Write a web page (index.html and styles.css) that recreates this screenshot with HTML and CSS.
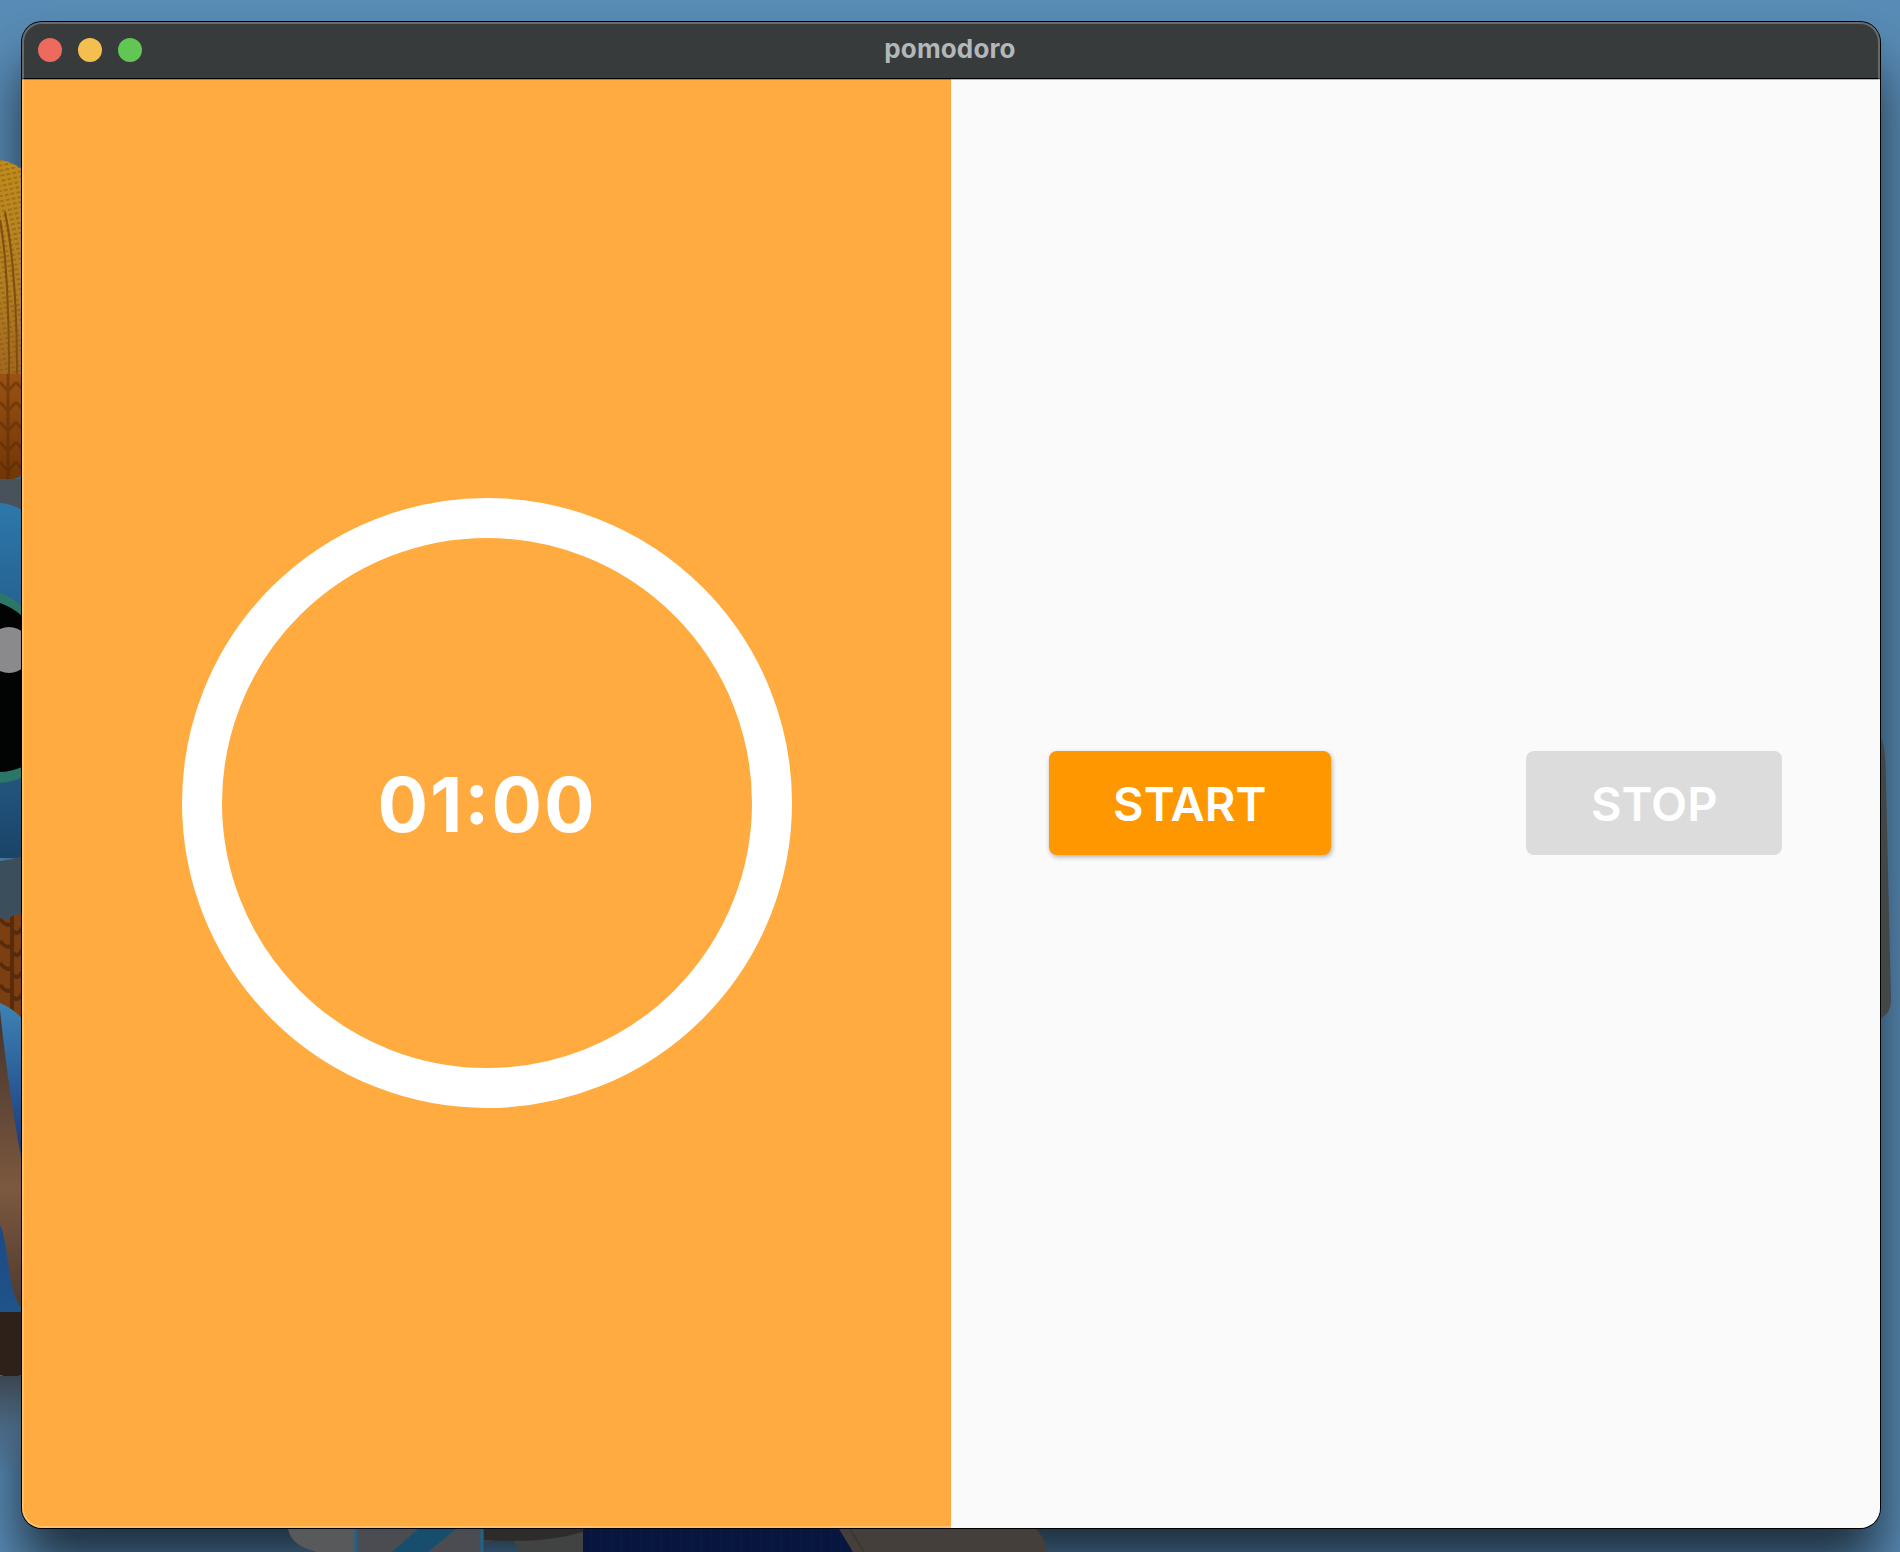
FILE: index.html
```html
<!DOCTYPE html>
<html lang="en">
<head>
<meta charset="utf-8">
<title>pomodoro</title>
<link rel="stylesheet" href="styles.css">
</head>
<body>
<div class="desktop">
  <svg class="wallpaper" width="1900" height="1552" viewBox="0 0 1900 1552" aria-hidden="true">
    <defs>
      <filter id="shade" x="-10%" y="-10%" width="120%" height="120%"><feGaussianBlur stdDeviation="27"/></filter>
      <pattern id="knit" width="6" height="5" patternUnits="userSpaceOnUse" patternTransform="rotate(-12)">
        <path d="M0 2h4" stroke="#7e4e12" stroke-width="1.5" opacity=".6"/>
      </pattern>
      <pattern id="rope" width="16" height="20" patternUnits="userSpaceOnUse">
        <path d="M0 2l8 9M16 2l-8 9M8 0v20" stroke="#4b2205" stroke-width="3" fill="none" opacity=".4"/>
      </pattern>
      <pattern id="braid" width="22" height="22" patternUnits="userSpaceOnUse" patternTransform="translate(0 915)">
        <path d="M0 4q8 10 13 3M13 16q5 5 9-3M12 0v22" stroke="#351704" stroke-width="4" fill="none" opacity=".5"/>
      </pattern>
      <linearGradient id="hat" x1="0" y1="0" x2="0" y2="1"><stop offset="0" stop-color="#c08c1c"/><stop offset=".6" stop-color="#b17f22"/><stop offset="1" stop-color="#a2661c"/></linearGradient>
      <linearGradient id="band" x1="0" y1="0" x2="0" y2="1"><stop offset="0" stop-color="#9a5212"/><stop offset="1" stop-color="#713606"/></linearGradient>
      <linearGradient id="arm" x1="0" y1="0" x2="0" y2="1"><stop offset="0" stop-color="#43342d"/><stop offset=".6" stop-color="#7c583f"/><stop offset="1" stop-color="#4e3a30"/></linearGradient>
      <linearGradient id="shirt" x1="0" y1="0" x2="0" y2="1"><stop offset="0" stop-color="#3d83b3"/><stop offset=".45" stop-color="#1c3f82"/><stop offset="1" stop-color="#1f5489"/></linearGradient>
      <linearGradient id="ground" x1="0" y1="0" x2="0" y2="1"><stop offset="0" stop-color="#3b4650"/><stop offset=".5" stop-color="#47627a" stop-opacity=".8"/><stop offset="1" stop-color="#47627a" stop-opacity="0"/></linearGradient>
      <linearGradient id="face" x1="0" y1="0" x2="0" y2="1"><stop offset="0" stop-color="#2d78ab"/><stop offset="1" stop-color="#24618f"/></linearGradient>
      <linearGradient id="neck" x1="0" y1="0" x2="0" y2="1"><stop offset="0" stop-color="#22567f"/><stop offset="1" stop-color="#1b4368"/></linearGradient>
      <pattern id="weave" width="10" height="4" patternUnits="userSpaceOnUse"><path d="M1 0v4" stroke="#061846" stroke-width="3" opacity=".6"/></pattern>
    </defs>
    <rect width="1900" height="1552" fill="#588bb5"/>
    <rect x="22" y="64" width="1858" height="1502" rx="22" fill="#000" opacity=".66" filter="url(#shade)"/>
    <path d="M0 160q12 2 22 9v211H0z" fill="url(#hat)"/>
    <path d="M0 160q12 2 22 9v211H0z" fill="url(#knit)"/>
    <path d="M0 220q9 50 9 155M5 212q12 60 12 163" stroke="#7e4e12" stroke-width="2" fill="none"/>
    <path d="M0 374h22v101q-8 6-22 4z" fill="url(#band)"/>
    <path d="M0 374h22v101q-8 6-22 4z" fill="url(#rope)"/>
    <path d="M0 479h22v31q-12-6-22-6z" fill="#47525b"/>
    <path d="M0 503q12 1 22 7v105H0z" fill="url(#face)"/>
    <path d="M0 593q12 3 22 14v180H0z" fill="#2b7667"/>
    <path d="M0 603q12 4 22 13v151q-12 5-22 5z" fill="#020404"/>
    <ellipse cx="9" cy="650" rx="22" ry="23" fill="#8a8a8c"/>
    <path d="M0 783q14-1 22-6v81H0z" fill="url(#neck)"/>
    <path d="M0 861q12-1 22-5v66H0z" fill="#3b4e5b"/>
    <path d="M0 917q4 3 7 3 7-7 15-6v110H0z" fill="#7b3f12"/>
    <path d="M0 917q4 3 7 3 7-7 15-6v110H0z" fill="url(#braid)"/>
    <path d="M0 1003q12 5 22 15v296H0z" fill="url(#shirt)"/>
    <path d="M0 1010q9 85 22 152v146q-8-6-13-38Q5 1235 0 1225z" fill="url(#arm)"/>
    <path d="M0 1312h22v63q-12 3-22 0z" fill="#2e211a"/>
    <path d="M0 1376h22v100H0z" fill="url(#ground)"/>
    <path d="M1880 736q6 8 6 50l5 215q0 12-11 18z" fill="#444747"/>
    <path d="M288 1529h67v23h-38q-26-6-29-23z" fill="#58595b"/>
    <path d="M356 1529h126v23H356z" fill="#4a4c51"/>
    <path d="M418 1529h38l-28 23h-36z" fill="#174d6d"/>
    <path d="M356 1529v23M482 1529v23" stroke="#1d638b" stroke-width="3"/>
    <path d="M484 1529h99v23h-64l-6-13-29 3z" fill="#414343"/>
    <path d="M484 1529h99v3q-40 12-99 8z" fill="#2d2c2b"/>
    <path d="M583 1529h257l14 23H583z" fill="#08163e"/>
    <path d="M583 1529h257l14 23H583z" fill="url(#weave)"/>
    <path d="M839 1529h197q10 10 11 23H853z" fill="#443f3a"/>
    <path d="M850 1529l14 23" stroke="#3c3733" stroke-width="2"/>
  </svg>

  <main class="window">
    <header class="titlebar">
      <div class="lights">
        <span class="light light-close"></span>
        <span class="light light-minimize"></span>
        <span class="light light-zoom"></span>
      </div>
      <h1 class="title">pomodoro</h1>
    </header>
    <div class="panes">
      <section class="timer-pane">
        <div class="ring"><span class="time">01:00</span></div>
      </section>
      <section class="controls-pane">
        <button class="button button-start">START</button>
        <button class="button button-stop" disabled>STOP</button>
      </section>
    </div>
  </main>
</div>
</body>
</html>
```
FILE: styles.css
```css
* {
  box-sizing: border-box;
}

body {
  margin: 0;
  font-family: Inter, "Liberation Sans", sans-serif;
}

.desktop {
  position: relative;
  width: 1900px;
  height: 1552px;
  padding: 22px 20px 24px 22px;
  overflow: hidden;
}

.wallpaper {
  position: absolute;
  inset: 0;
}

.window {
  position: relative;
  display: flex;
  flex-direction: column;
  width: 100%;
  height: 100%;
  border-radius: 20px;
  box-shadow: 0 0 0 1px #000;
  overflow: hidden;
}

/* light rim drawn over the window edge */
.window::after {
  content: "";
  position: absolute;
  inset: 0;
  border-radius: 20px;
  box-shadow: inset 0 0 0 2px rgba(255, 255, 255, 0.24);
  pointer-events: none;
}

.titlebar {
  display: grid;
  grid-template-columns: 1fr auto 1fr;
  align-items: center;
  height: 57px;
  padding: 0 16px;
  background: #383b3c;
  border-bottom: 1px solid #000;
}

.lights {
  display: flex;
  gap: 16px;
}

.light {
  width: 24px;
  height: 24px;
  border-radius: 50%;
}

.light-close {
  background: #ed6a5f;
}

.light-minimize {
  background: #f5bf50;
}

.light-zoom {
  background: #62c655;
}

.title {
  margin: 0;
  padding: 0 2px 3px 0;
  font-size: 26px;
  font-weight: 700;
  line-height: 32px;
  letter-spacing: 0.15px;
  color: #b3b7b8;
}

.panes {
  display: grid;
  grid-template-columns: 1fr 1fr;
  flex: 1;
}

.timer-pane,
.controls-pane {
  display: flex;
  align-items: center;
  padding-bottom: 2px;
  box-shadow: inset 0 1px 0 rgba(0, 0, 0, 0.28);
}

.timer-pane {
  justify-content: center;
  background: #ffab40;
}

.ring {
  display: flex;
  align-items: center;
  justify-content: center;
  width: 610px;
  height: 610px;
  border: 40px solid #fff;
  border-radius: 50%;
}

.time {
  padding: 4px 0 0 1px;
  font-size: 75px;
  font-weight: 740;
  font-feature-settings: "calt" 1, "case" 1;
  letter-spacing: 2px;
  color: #fff;
}

.controls-pane {
  justify-content: space-around;
  background: #fafafa;
}

.button {
  height: 104px;
  padding: 2px 0 0;
  border: 0;
  border-radius: 8px;
  font-family: inherit;
  font-size: 47px;
  font-weight: 580;
  color: #fff;
}

.button-start {
  width: 282px;
  background: #ff9800;
  box-shadow: 1px 2px 5px rgba(0, 0, 0, 0.3);
}

.button-stop {
  width: 256px;
  background: #dcdcdc;
}
```
